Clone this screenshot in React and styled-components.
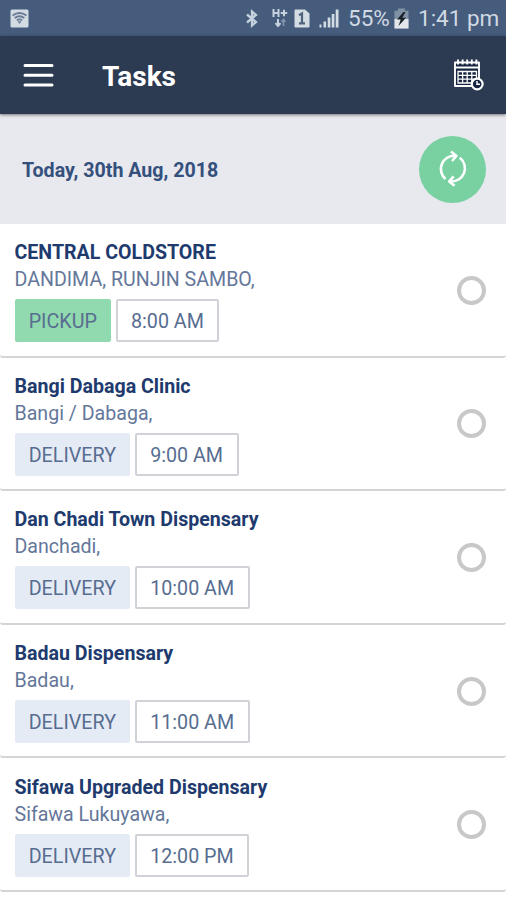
import React from 'react';
import styled, { createGlobalStyle } from 'styled-components';

const tasks = [
  { name: 'CENTRAL COLDSTORE', place: 'DANDIMA, RUNJIN SAMBO,', type: 'PICKUP', time: '8:00 AM' },
  { name: 'Bangi Dabaga Clinic', place: 'Bangi / Dabaga,', type: 'DELIVERY', time: '9:00 AM' },
  { name: 'Dan Chadi Town Dispensary', place: 'Danchadi,', type: 'DELIVERY', time: '10:00 AM' },
  { name: 'Badau Dispensary', place: 'Badau,', type: 'DELIVERY', time: '11:00 AM' },
  { name: 'Sifawa Upgraded Dispensary', place: 'Sifawa Lukuyawa,', type: 'DELIVERY', time: '12:00 PM' },
];

const WifiIcon = () => (
  <svg width="19" height="19" viewBox="0 0 19 19">
    <rect x="0.5" y="0.5" width="18" height="18" rx="1.5" fill="#d3dbe3" />
    <g fill="none" stroke="#6a7c94" strokeWidth="1.8">
      <path d="M2.5 6.5Q9.5 1.5 16.5 6.5" />
      <path d="M4.7 9Q9.5 5.5 14.3 9" />
      <path d="M6.8 11.4Q9.5 9.4 12.2 11.4" />
    </g>
    <path d="M7.6 12.2h3.8L9.5 15z" fill="#6a7c94" />
  </svg>
);

const BluetoothIcon = () => (
  <svg width="14" height="19" viewBox="0 0 14 19" fill="none" stroke="#c6d1de" strokeWidth="2.3">
    <path d="M1 5.5l9 7.6-4 3.4V2.5l4 3.4-9 7.6" />
  </svg>
);

const DataIcon = () => (
  <svg width="16" height="20" viewBox="0 0 16 20" fill="none" stroke="#c6d1de" strokeWidth="2">
    <path d="M1.5 1v8M6.5 1v8M1.5 5h5M8.7 5h6.5M12 1.8v6.4" />
    <path d="M6 11v7M3.5 15.2L6 18l2.5-2.8" />
    <path d="M11.5 18v-6M9.5 13.8l2-2.4 2 2.4" stroke="#8296ae" strokeWidth="1.6" />
  </svg>
);

const SimIcon = () => (
  <svg width="16" height="19" viewBox="0 0 16 19">
    <path d="M1.5 0.5h9.5l4.5 4v13a1 1 0 0 1-1 1h-13a1 1 0 0 1-1-1v-16a1 1 0 0 1 1-1z" fill="#d3dbe3" />
    <path d="M5 6.2l3-1.7v9.8M5 14.3h6" fill="none" stroke="#4f647f" strokeWidth="2.2" />
  </svg>
);

const SignalIcon = () => (
  <svg width="20" height="19" viewBox="0 0 20 19" fill="#d3dbe3">
    <rect x="0.5" y="15.5" width="2" height="3" />
    <rect x="4.5" y="12.5" width="2.6" height="6" />
    <rect x="8.7" y="8.5" width="2.7" height="10" />
    <rect x="12.7" y="5" width="2.7" height="13.5" />
    <rect x="16.7" y="0.5" width="2.8" height="18" />
  </svg>
);

const BatteryIcon = () => (
  <svg width="15" height="21" viewBox="0 0 15 21">
    <path d="M4 0.5h7v2.2h3.5V20.5h-14V2.7H4z" fill="#8292a5" />
    <path d="M0.5 11h14v9.5h-14z" fill="#e3e7eb" />
    <path d="M9.5 4L3 11.5h3.7L4.5 18 12 9.8H8.3L11.5 4z" fill="#1b2129" />
  </svg>
);

const MenuIcon = () => (
  <svg width="32" height="26" viewBox="0 0 32 26" stroke="#fff" strokeWidth="3" strokeLinecap="round">
    <path d="M3 3.6h27M3 13.2h27M3 22.9h27" />
  </svg>
);

const CalendarIcon = () => (
  <svg width="34" height="34" viewBox="0 0 34 34" fill="none" stroke="#fff">
    <path d="M4 4.5h24V28H4z" fill="#17243f" strokeWidth="1.9" strokeLinejoin="round" />
    <path d="M4 9.5h24" strokeWidth="2" />
    <path d="M7 1.5v5M11.6 1.5v5M16.2 1.5v5M20.8 1.5v5M25.4 1.5v5" strokeWidth="1.9" />
    <path d="M7 13.5h18.5v11.5H7zM7 17.3h18.5M7 21.2h18.5M11.6 13.5v11.5M16.2 13.5v11.5M20.8 13.5v11.5" strokeWidth="1.3" />
    <circle cx="26.2" cy="26" r="5.4" fill="#17243f" strokeWidth="2.2" />
    <path d="M26 23v3.2h3" strokeWidth="1.5" />
  </svg>
);

const SyncIcon = () => (
  <svg width="32" height="38" viewBox="0 0 32 38" fill="none" stroke="#fff" strokeWidth="2.6">
    <path d="M8.5 29A13.2 13.2 0 0 1 18 5.8" />
    <path d="M14 1.6l5.4 4.4-4.4 5" strokeLinejoin="round" />
    <path d="M22.8 7.8A13.2 13.2 0 0 1 13.5 31.4" />
    <path d="M17.6 35.8l-5.4-4.4 4.4-5" strokeLinejoin="round" />
  </svg>
);

const App = () => (
  <Screen>
    <GlobalStyle />
    <StatusBar>
      <WifiIcon />
      <StatusGroup>
        <BluetoothIcon />
        <DataIcon />
        <SimIcon />
        <SignalIcon />
        <StatusText $width={42}>55%</StatusText>
        <BatteryIcon />
        <StatusText $width={81}>1:41 pm</StatusText>
      </StatusGroup>
    </StatusBar>
    <Toolbar>
      <IconButton aria-label="Menu"><MenuIcon /></IconButton>
      <Title>Tasks</Title>
      <IconButton aria-label="Calendar"><CalendarIcon /></IconButton>
    </Toolbar>
    <DateBar>
      <DateLabel>Today, 30th Aug, 2018</DateLabel>
      <SyncButton aria-label="Sync"><SyncIcon /></SyncButton>
    </DateBar>
    <TaskList>
      {tasks.map((task) => (
        <TaskRow key={task.name}>
          <TaskInfo>
            <TaskName>{task.name}</TaskName>
            <TaskPlace>{task.place}</TaskPlace>
            <Chips>
              <TypeChip $pickup={task.type === 'PICKUP'}>{task.type}</TypeChip>
              <TimeChip>{task.time}</TimeChip>
            </Chips>
          </TaskInfo>
          <Radio type="button" aria-label="Complete" />
        </TaskRow>
      ))}
    </TaskList>
  </Screen>
);

const GlobalStyle = createGlobalStyle`
  body {
    margin: 0;
    background: #fff;
    font-family: Roboto, "Liberation Sans", sans-serif;
  }
`;

const Screen = styled.div`
  width: 506px;
  height: 900px;
  overflow: hidden;
  display: flex;
  flex-direction: column;
  background: #fff;
`;

const StatusBar = styled.div`
  flex: none;
  height: 36px;
  box-sizing: border-box;
  padding: 0 7px 0 10px;
  display: flex;
  align-items: center;
  justify-content: space-between;
  background: #455c7c;
`;

const StatusGroup = styled.div`
  display: flex;
  align-items: center;

  svg {
    flex: none;
    margin-right: 9px;
  }

  svg:nth-child(1) {
    margin-right: 12px;
  }

  svg:nth-child(2) {
    margin-right: 6px;
  }
`;

const StatusText = styled.span`
  width: ${(props) => props.$width}px;
  margin-right: ${(props) => (props.$width === 42 ? '4px' : 0)};
  color: #d0d9e4;
  font-size: 22.5px;
  line-height: 37px;
  white-space: nowrap;
`;

const Toolbar = styled.header`
  flex: none;
  height: 78px;
  box-sizing: border-box;
  padding: 0 21px 0 22px;
  display: flex;
  align-items: center;
  background: #2c3a52;
  box-shadow: 0 1px 3px rgba(0, 0, 0, 0.5);
  z-index: 1;
`;

const IconButton = styled.button`
  padding: 0;
  border: none;
  background: none;
  display: flex;
`;

const Title = styled.h1`
  flex: 1;
  margin: 3px 0 0 48px;
  color: #fff;
  font-size: 28px;
  font-weight: 700;
`;

const DateBar = styled.div`
  flex: none;
  height: 110px;
  box-sizing: border-box;
  padding: 0 20px 0 22px;
  display: flex;
  align-items: center;
  justify-content: space-between;
  background: #e8e8ef;
`;

const DateLabel = styled.span`
  margin-top: 2px;
  color: #34507c;
  font-size: 19.65px;
  font-weight: 700;
`;

const SyncButton = styled.button`
  width: 67px;
  height: 67px;
  padding: 0;
  border: none;
  border-radius: 50%;
  display: flex;
  align-items: center;
  justify-content: center;
  background: #79d1a1;
`;

const TaskList = styled.div`
  flex: none;
`;

const TaskRow = styled.div`
  height: 133.6px;
  box-sizing: border-box;
  padding: 0 20px 0 14.5px;
  display: flex;
  align-items: center;
  justify-content: space-between;
  border-bottom: 2px solid #d3d4d8;
  border-radius: 3px;
`;

const TaskInfo = styled.div`
  display: flex;
  flex-direction: column;
  padding-top: 2px;
`;

const TaskName = styled.div`
  color: #203a6e;
  font-size: 19.6px;
  font-weight: 700;
  line-height: 27px;
`;

const TaskPlace = styled.div`
  color: #64779a;
  font-size: 19.6px;
  line-height: 27px;
`;

const Chips = styled.div`
  display: flex;
  gap: 4.5px;
  margin-top: 6px;
`;

const Chip = styled.span`
  height: 43px;
  box-sizing: border-box;
  padding: 1px 14.2px 0;
  border-radius: 2px;
  color: #576d90;
  font-size: 19.7px;
  line-height: 43px;
  white-space: nowrap;
`;

const TypeChip = styled(Chip)`
  background: ${(props) => (props.$pickup ? '#91d9ae' : '#e5ebf5')};
`;

const TimeChip = styled(Chip)`
  border: 2px solid #d0d2d8;
  padding: 0 13.5px;
  line-height: 41px;
`;

const Radio = styled.button`
  width: 29px;
  height: 29px;
  margin-top: 1px;
  padding: 0;
  border: 4px solid #c8c8c8;
  border-radius: 50%;
  background: #fff;
`;

export default App;
